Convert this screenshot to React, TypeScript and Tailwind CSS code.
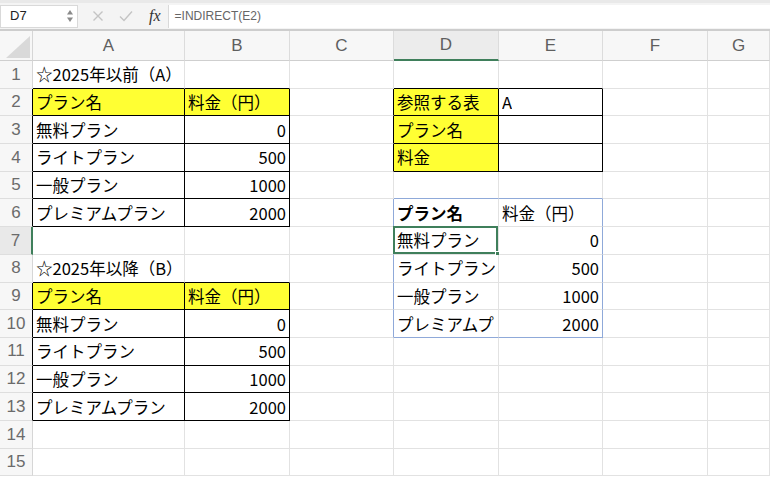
import type { ReactNode } from "react";

type Color = "grid" | "black" | "blue" | "green";

type Cell = { v: string; num?: boolean; bold?: boolean; yellow?: boolean };

const COLS = ["A", "B", "C", "D", "E", "F", "G"];
const ROW_COUNT = 15;
const FONT = "font-['Noto_Sans_CJK_JP','Noto_Sans',sans-serif]";

const CELLS: Record<string, Cell> = {
  A1: { v: "☆2025年以前（A）" },
  A2: { v: "プラン名", yellow: true },
  B2: { v: "料金（円）", yellow: true },
  A3: { v: "無料プラン" },
  B3: { v: "0", num: true },
  A4: { v: "ライトプラン" },
  B4: { v: "500", num: true },
  A5: { v: "一般プラン" },
  B5: { v: "1000", num: true },
  A6: { v: "プレミアムプラン" },
  B6: { v: "2000", num: true },
  A8: { v: "☆2025年以降（B）" },
  A9: { v: "プラン名", yellow: true },
  B9: { v: "料金（円）", yellow: true },
  A10: { v: "無料プラン" },
  B10: { v: "0", num: true },
  A11: { v: "ライトプラン" },
  B11: { v: "500", num: true },
  A12: { v: "一般プラン" },
  B12: { v: "1000", num: true },
  A13: { v: "プレミアムプラン" },
  B13: { v: "2000", num: true },
  D2: { v: "参照する表", yellow: true },
  E2: { v: "A" },
  D3: { v: "プラン名", yellow: true },
  D4: { v: "料金", yellow: true },
  D6: { v: "プラン名", bold: true },
  E6: { v: "料金（円）" },
  D7: { v: "無料プラン" },
  E7: { v: "0", num: true },
  D8: { v: "ライトプラン" },
  E8: { v: "500", num: true },
  D9: { v: "一般プラン" },
  E9: { v: "1000", num: true },
  D10: { v: "プレミアムプラン" },
  E10: { v: "2000", num: true },
};

// bordered ranges: [c0, c1, r0, r1, colour, allInner]
const BOXES: [number, number, number, number, Color, boolean][] = [
  [1, 2, 2, 6, "black", true],
  [1, 2, 9, 13, "black", true],
  [4, 5, 2, 4, "black", true],
  [4, 5, 6, 10, "blue", false],
];

const RIGHT: Record<Color, string> = {
  grid: "border-r-[#e2e2e2]",
  black: "border-r-black",
  blue: "border-r-[#8fa9d9]",
  green: "border-r-[#3f7f5b]",
};
const BOTTOM: Record<Color, string> = {
  grid: "border-b-[#e2e2e2]",
  black: "border-b-black",
  blue: "border-b-[#8fa9d9]",
  green: "border-b-[#3f7f5b]",
};

function edges(col: number, row: number): { r: Color; b: Color } {
  let r: Color = "grid";
  let b: Color = "grid";
  for (const [c0, c1, r0, r1, color, inner] of BOXES) {
    const inRows = row >= r0 && row <= r1;
    const inCols = col >= c0 && col <= c1;
    if (inRows && col === c0 - 1) r = color;
    if (inCols && row === r0 - 1) b = color;
    if (inRows && inCols) {
      if (inner || col === c1) r = color;
      if (inner || row === r1) b = color;
    }
  }
  return { r, b };
}

function SheetCell({ col, row }: { col: number; row: number }) {
  const id = `${COLS[col - 1]}${row}`;
  const cell = CELLS[id];
  const { r, b } = edges(col, row);
  const selected = id === "D7";
  return (
    <div
      className={`relative flex h-full min-w-0 items-center overflow-visible border-r border-b px-[3px] ${RIGHT[r]} ${BOTTOM[b]} ${
        cell?.yellow ? "bg-[#ffff33]" : "bg-white"
      } ${cell?.num ? "justify-end" : "justify-start"}`}
    >
      {cell && (
        <span
          className={`min-w-0 overflow-hidden whitespace-nowrap text-[16.5px] leading-[22px] text-black ${
            cell.bold ? "font-bold" : "font-normal"
          }`}
        >
          {cell.v}
        </span>
      )}
      {selected && (
        <>
          <div className="pointer-events-none absolute -top-px -left-px right-0 bottom-0 border-2 border-[#3f7f5b]" />
          <div className="absolute -right-[3px] -bottom-[3px] h-[6px] w-[6px] border border-white bg-[#3f7f5b]" />
        </>
      )}
    </div>
  );
}

function RowHeader({ row }: { row: number }) {
  const blackEdge = (row >= 2 && row <= 6) || (row >= 9 && row <= 13);
  const active = row === 7;
  return (
    <div
      className={`flex h-full items-center justify-center border-b border-b-[#dedede] font-['Liberation_Sans',sans-serif] text-[17px] text-[#6b6b6b] ${
        active
          ? "border-r-2 border-r-[#3f7f5b] bg-[#e9e9e9]"
          : blackEdge
            ? "border-r border-r-black bg-[#f7f7f7]"
            : "border-r border-r-[#d6d6d6] bg-[#f7f7f7]"
      }`}
    >
      {row}
    </div>
  );
}

function Row({ children }: { children: ReactNode }) {
  return (
    <div className="grid h-[27.7px] grid-cols-[33px_152px_105px_104px_105px_104px_105px_1fr]">
      {children}
    </div>
  );
}

function Toolbar() {
  return (
    <div className="flex h-[31px] items-center border-t-[3px] border-b-2 border-t-[#e9e9e9] border-b-[#cdcdcd] bg-[#f4f4f4]">
      <div className="flex h-[23px] w-[78px] items-center justify-between border border-[#d9d9d9] bg-white pr-[3px] pl-[9px]">
        <span className="font-['Liberation_Sans',sans-serif] text-[13px] text-[#222]">D7</span>
        <svg width="8" height="16" viewBox="0 0 8 16" fill="#8a8a8a">
          <path d="M4 2 L7 6.5 L1 6.5 Z" />
          <path d="M4 14 L7 9.5 L1 9.5 Z" />
        </svg>
      </div>
      <svg className="ml-[14px]" width="12" height="12" viewBox="0 0 12 12" stroke="#c4c4c4" strokeWidth="1.4" fill="none">
        <path d="M1.5 1.5 L10.5 10.5 M10.5 1.5 L1.5 10.5" />
      </svg>
      <svg className="ml-[15px]" width="14" height="12" viewBox="0 0 14 12" stroke="#c4c4c4" strokeWidth="1.4" fill="none">
        <path d="M1 6.5 L5 10.5 L13 1.5" />
      </svg>
      <span className="ml-[16px] font-['Liberation_Serif',serif] text-[16px] italic text-[#333]">
        fx
      </span>
      <div className="ml-[7px] flex h-[23px] flex-1 items-center border-l border-[#d9d9d9] bg-white pl-[6px]">
        <span className="font-['Liberation_Sans',sans-serif] text-[12px] text-[#666]">
          =INDIRECT(E2)
        </span>
      </div>
    </div>
  );
}

export default function App() {
  return (
    <div className={`h-[477px] w-[770px] overflow-hidden bg-white ${FONT}`}>
      <Toolbar />
      <div className="grid h-[30px] grid-cols-[33px_152px_105px_104px_105px_104px_105px_1fr] font-['Liberation_Sans',sans-serif]">
        <div className="flex items-end justify-end border-r border-b border-r-[#d6d6d6] border-b-[#cfcfcf] bg-[#f7f7f7] pr-[2px] pb-[2px]">
          <svg width="24" height="22" viewBox="0 0 24 22">
            <path d="M24 0 L24 22 L0 22 Z" fill="#d9d9d9" />
          </svg>
        </div>
        {COLS.map((c) => (
          <div
            key={c}
            className={`flex items-center justify-center border-r border-r-[#dcdcdc] text-[17px] text-[#5f5f5f] ${
              c === "D"
                ? "border-b-2 border-b-[#3f7f5b] bg-[#ececec]"
                : "border-b border-b-[#cfcfcf] bg-[#f7f7f7]"
            }`}
          >
            {c}
          </div>
        ))}
      </div>
      {Array.from({ length: ROW_COUNT }, (_, i) => i + 1).map((row) => (
        <Row key={row}>
          <RowHeader row={row} />
          {COLS.map((_, ci) => (
            <SheetCell key={ci} col={ci + 1} row={row} />
          ))}
        </Row>
      ))}
    </div>
  );
}
